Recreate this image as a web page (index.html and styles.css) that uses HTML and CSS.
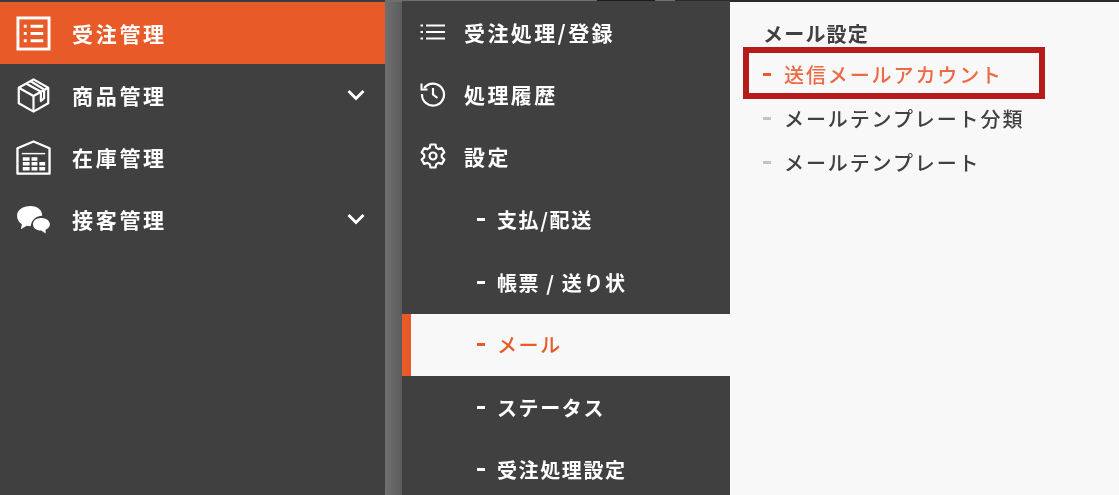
FILE: index.html
```html
<!DOCTYPE html>
<html lang="ja">
<head>
    <meta charset="UTF-8">
    <title>メール設定</title>
    <link rel="stylesheet" href="styles.css">
</head>
<body>
    <div class="topline">
        <span class="topline-dark"></span>
        <span class="topline-mark"></span>
        <span class="topline-black"></span>
    </div>
    <div class="layout">
        <nav class="sidebar">
            <a class="side-item active">
                <svg class="side-icon" viewBox="0 0 36 36" fill="none" stroke="#fff">
                    <rect x="2" y="2" width="32" height="32" stroke-width="3"/>
                    <path d="M15 10.500h13M15 18h13M15 25.500h13" stroke-width="3.200"/>
                    <path d="M8 10.500h3M8 18h3M8 25.500h3" stroke-width="3.200"/>
                </svg>
                <span class="side-label">受注管理</span>
            </a>
            <a class="side-item">
                <svg class="side-icon" viewBox="0 0 36 38" fill="none" stroke="#fff" stroke-width="2.400" stroke-linejoin="round">
                    <path d="M18 1.500L34 10.500V27.500L18 36.500L2 27.500V10.500Z"/>
                    <path d="M2 10.500L18 19.500L34 10.500M18 19.500V36.500"/>
                    <path d="M10 6L26 15M15 3.500L29.500 12.500"/>
                    <path d="M26 15V25L29.500 22V12.500"/>
                </svg>
                <span class="side-label">商品管理</span>
                <svg class="chevron" viewBox="0 0 18 12" fill="none" stroke="#fff" stroke-width="2.800">
                    <path d="M1.500 2L9 9.500L16.500 2"/>
                </svg>
            </a>
            <a class="side-item">
                <svg class="side-icon" viewBox="0 0 36 36" fill="none" stroke="#fff">
                    <path d="M1.500 34.500V8.500L18 1.500L34.500 8.500V34.500Z" stroke-width="2.400" stroke-linejoin="round"/>
                    <path d="M6 14h24" stroke-width="1.500"/>
                    <path d="M7 19.500h7M16 19.500h6M7 24.500h7M16 24.500h6M24 24.500h6M7 29.500h7M16 29.500h6M24 29.500h6" stroke-width="3.600"/>
                </svg>
                <span class="side-label">在庫管理</span>
            </a>
            <a class="side-item">
                <svg class="side-icon chat" viewBox="0 0 36 30" fill="#fff">
                    <path d="M15 1C7 1 1 5 1 11C1 15 3 18 6 20L5 25L11 21.500C12.500 21.800 13.500 22 15 22C16 15 21 11 27 11C27 5 22 1 15 1Z"/>
                    <path d="M26 13.500C20.500 13.500 17.500 16.500 17.500 20C17.500 23.500 20.500 26.500 26 26.500L30.500 29.500L30.500 25.500C33 24.500 35 22.500 35 20C35 16.500 31 13.500 26 13.500Z"/>
                </svg>
                <span class="side-label">接客管理</span>
                <svg class="chevron" viewBox="0 0 18 12" fill="none" stroke="#fff" stroke-width="2.800">
                    <path d="M1.500 2L9 9.500L16.500 2"/>
                </svg>
            </a>
        </nav>
        <div class="gutter"></div>
        <nav class="submenu">
            <a class="sub-item">
                <svg class="sub-icon" viewBox="0 0 26 20" fill="none" stroke="#fff" stroke-width="2.200">
                    <path d="M6 3.500h19M6 10h19M6 16.500h19"/>
                    <path d="M0.500 3.500h2.500M0.500 10h2.500M0.500 16.500h2.500"/>
                </svg>
                <span>受注処理/登録</span>
            </a>
            <a class="sub-item">
                <svg class="sub-icon" viewBox="0 0 26 26" fill="none" stroke="#fff" stroke-width="2.200">
                    <path d="M4.200 7A11 11 0 1 1 2 13"/>
                    <path d="M1.500 2.500V8.500H7.500" stroke-width="2"/>
                    <path d="M13 7V13.500L17.500 17"/>
                </svg>
                <span>処理履歴</span>
            </a>
            <a class="sub-item parent">
                <svg class="sub-icon" viewBox="0 0 26 26" fill="none" stroke="#fff" stroke-width="2.200" stroke-linejoin="round">
                    <path d="M10.500 1.500h5l.8 3.400 2.200 1.200 3.300-1 2.500 4.300-2.500 2.300v2.600l2.500 2.300-2.500 4.300-3.300-1-2.200 1.200-.8 3.400h-5l-.8-3.400-2.200-1.200-3.300 1-2.500-4.300 2.500-2.300v-2.600l-2.500-2.300 2.500-4.300 3.300 1 2.200-1.200Z"/>
                    <circle cx="13" cy="13" r="3.500"/>
                </svg>
                <span>設定</span>
            </a>
            <a class="sub-item child"><i class="dash"></i><span>支払/配送</span></a>
            <a class="sub-item child"><i class="dash"></i><span>帳票 / 送り状</span></a>
            <a class="sub-item child current"><i class="dash"></i><span>メール</span></a>
            <a class="sub-item child"><i class="dash"></i><span>ステータス</span></a>
            <a class="sub-item child"><i class="dash"></i><span>受注処理設定</span></a>
        </nav>
        <main class="detail">
            <h2 class="detail-title">メール設定</h2>
            <ul class="mail-list">
                <li class="mail-item selected"><i class="dash"></i><span>送信メールアカウント</span></li>
                <li class="mail-item"><i class="dash"></i><span>メールテンプレート分類</span></li>
                <li class="mail-item"><i class="dash"></i><span>メールテンプレート</span></li>
            </ul>
        </main>
    </div>
</body>
</html>
```

FILE: styles.css
```css
*, *::after {
    box-sizing: border-box;
}

html, body {
    height: 100%;
}

body {
    margin: 0;
    overflow: hidden;
    background-color: #404040;
    font-family: "Noto Sans CJK JP", "Noto Sans", sans-serif;
    font-weight: 700;
    color: #fff;
}

.topline {
    display: flex;
    height: 2px;
    background-color: #6e6e6e;
}

.topline-dark {
    width: 385px;
    background-color: #3c3c3c;
}

.topline-mark {
    margin-left: 212px;
    width: 58px;
    background-color: #1c1c1c;
}

.topline-black {
    margin-left: 20px;
    flex: 1;
    background-color: #2a2a2a;
}

.layout {
    display: flex;
    height: 493px;
    filter: blur(0.4px);
}

/* left menu */
.sidebar {
    width: 385px;
    background-color: #404040;
}

.side-item {
    display: flex;
    align-items: center;
    height: 62px;
    padding: 0 20px 0 16px;
    font-size: 21px;
    letter-spacing: 2.700px;
}

.side-item.active {
    background-color: #e85a28;
}

.side-icon {
    width: 35px;
    height: 35px;
    flex: none;
}

.side-icon.chat {
    height: 29px;
}

.side-label {
    margin-left: 21px;
    flex: 1;
}

.chevron {
    width: 18px;
    height: 12px;
}

.gutter {
    width: 17px;
    background: linear-gradient(to right, #6f6f6f, #5c5c5c);
}

/* second menu */
.submenu {
    width: 328px;
    margin-top: -1px;
    background-color: #404040;
}

.sub-item {
    display: flex;
    align-items: center;
    height: 62px;
    padding-left: 18px;
    font-size: 21px;
    letter-spacing: 2.400px;
}

.sub-item.parent {
    margin-bottom: 1.500px;
}

.sub-icon {
    width: 26px;
    height: 26px;
    flex: none;
    margin-right: 18px;
}

.dash {
    display: block;
    width: 8px;
    height: 3px;
    background-color: #fff;
}

.sub-item.child {
    height: 62.500px;
    padding-left: 75px;
    font-size: 20px;
    letter-spacing: 1.600px;
}

.sub-item.child .dash {
    margin-right: 12px;
}

.sub-item.current {
    margin-right: -1px;
    background-color: #f8f8f8;
    border-left: 9px solid #e85a28;
    padding-left: 66px;
    color: #e85a28;
    font-weight: 500;
}

.sub-item.current .dash {
    background-color: #e85a28;
}

/* right panel */
.detail {
    flex: 1;
    background-color: #f8f8f8;
    padding: 13px 0 0 33px;
    color: #404040;
}

.detail-title {
    margin: 0;
    font-size: 20px;
    line-height: 37px;
    font-weight: 700;
    letter-spacing: 1.200px;
}

.mail-list {
    list-style: none;
    margin: 0;
    padding: 0;
}

.mail-item {
    display: flex;
    align-items: center;
    position: relative;
    height: 44px;
    font-size: 20px;
    font-weight: 500;
    letter-spacing: 1.900px;
}

.mail-item .dash {
    width: 8px;
    margin-right: 13px;
    background-color: #c4c4c4;
}

.mail-item.selected {
    color: #ec6a45;
}

.mail-item.selected .dash {
    background-color: #e85a28;
}

.mail-item.selected::after {
    content: "";
    position: absolute;
    left: -20px;
    top: -5px;
    width: 302px;
    height: 52px;
    border: 6px solid #b71c1c;
}
```
